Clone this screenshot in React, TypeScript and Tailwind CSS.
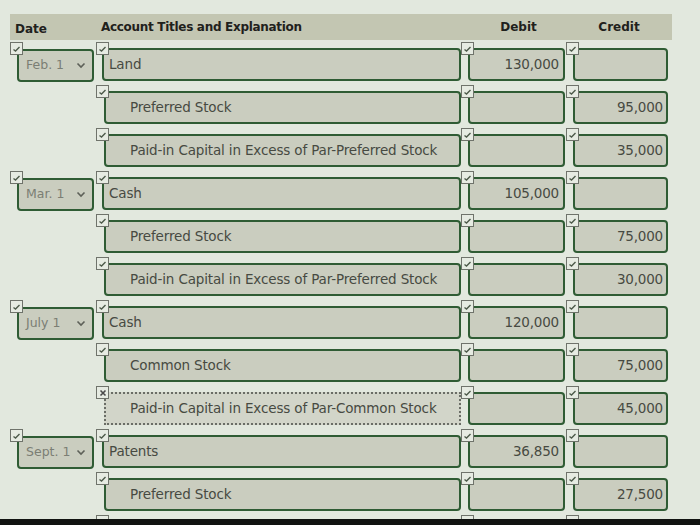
import React from "react";

type Row = {
  date?: string;
  account: string;
  credit?: boolean;
  debitAmt?: string;
  creditAmt?: string;
  wrong?: boolean;
};

const rows: Row[] = [
  { date: "Feb. 1", account: "Land", debitAmt: "130,000" },
  { account: "Preferred Stock", credit: true, creditAmt: "95,000" },
  { account: "Paid-in Capital in Excess of Par-Preferred Stock", credit: true, creditAmt: "35,000" },
  { date: "Mar. 1", account: "Cash", debitAmt: "105,000" },
  { account: "Preferred Stock", credit: true, creditAmt: "75,000" },
  { account: "Paid-in Capital in Excess of Par-Preferred Stock", credit: true, creditAmt: "30,000" },
  { date: "July 1", account: "Cash", debitAmt: "120,000" },
  { account: "Common Stock", credit: true, creditAmt: "75,000" },
  { account: "Paid-in Capital in Excess of Par-Common Stock", credit: true, creditAmt: "45,000", wrong: true },
  { date: "Sept. 1", account: "Patents", debitAmt: "36,850" },
  { account: "Preferred Stock", credit: true, creditAmt: "27,500" },
  { account: "", credit: true },
];

const Mark = ({ wrong = false }: { wrong?: boolean }) => (
  <span className="absolute left-0 top-0 z-10 flex h-[13px] w-[13px] items-center justify-center border border-[#6f736b] bg-[#e6ebe2]">
    {wrong ? (
      <svg width="8" height="8" viewBox="0 0 8 8">
        <path d="M1.5 1.5 L6.5 6.5 M6.5 1.5 L1.5 6.5" stroke="#4a4a4a" strokeWidth="1.6" />
      </svg>
    ) : (
      <svg width="9" height="8" viewBox="0 0 9 8">
        <path d="M1.5 4.5 L3.5 6 L7.5 2" stroke="#4d5a4a" strokeWidth="1.4" fill="none" />
      </svg>
    )}
  </span>
);

const boxCls =
  "h-[33px] rounded-[4px] border-2 border-[#2f5c34] bg-[#cacdbf] flex items-center";

export default function App() {
  return (
    <div
      className="flex h-[525px] w-[700px] flex-col overflow-hidden bg-[#e2e8de] text-[#474a42]"
      style={{ fontFamily: '"DejaVu Sans", Verdana, sans-serif' }}
    >
      <div className="flex-1 overflow-hidden px-[10px] pt-[14px]">
        {/* header */}
        <div className="grid h-[26px] w-[662px] grid-cols-[86px_365px_105px_106px] items-center bg-[#c3c6b2] text-[12px] font-bold text-[#1f211c]">
          <div className="pl-[5px] pt-[4px]">Date</div>
          <div className="pl-[5px] tracking-[-0.3px]">Account Titles and Explanation</div>
          <div className="pl-[10px] text-center">Debit</div>
          <div className="text-center">Credit</div>
        </div>

        <div className="mt-[2px] flex flex-col">
          {rows.map((r, i) => (
            <div key={i} className="grid h-[43px] grid-cols-[86px_365px_105px_106px]">
              <div className="relative">
                {r.date && (
                  <>
                    <Mark />
                    <div className={`${boxCls} ml-[7px] mt-[7px] w-[77px] justify-between pl-[7px] pr-[6px] text-[12.5px] text-[#7b7e74]`}>
                      <span>{r.date}</span>
                      <svg width="10" height="7" viewBox="0 0 10 7">
                        <path d="M1.5 1.5 L5 5 L8.5 1.5" stroke="#5d6058" strokeWidth="1.6" fill="none" />
                      </svg>
                    </div>
                  </>
                )}
              </div>
              <div className="relative">
                <Mark wrong={r.wrong} />
                <div
                  className={
                    r.wrong
                      ? "ml-[8px] mt-[6px] flex h-[33px] w-[357px] items-center border-2 border-dotted border-[#6a6d66] bg-[#d2d5c9] pl-[24px] text-[13.5px] tracking-[-0.15px]"
                      : `${boxCls} ${r.credit ? "ml-[8px] w-[357px] pl-[24px]" : "ml-[6px] w-[359px] pl-[5px]"} mt-[6px] text-[13.5px] tracking-[-0.15px]`
                  }
                >
                  {r.account}
                </div>
              </div>
              <div className="relative">
                <Mark />
                <div className={`${boxCls} ml-[7px] mt-[6px] w-[97px] justify-end pr-[4px] text-[13.5px] tracking-[-0.2px]`}>
                  {r.debitAmt}
                </div>
              </div>
              <div className="relative">
                <Mark />
                <div className={`${boxCls} ml-[7px] mt-[6px] w-[95px] justify-end pr-[3px] text-[13.5px] tracking-[-0.2px]`}>
                  {r.creditAmt}
                </div>
              </div>
            </div>
          ))}
        </div>
      </div>
      <div className="h-[6px] bg-[#111311]" />
    </div>
  );
}
